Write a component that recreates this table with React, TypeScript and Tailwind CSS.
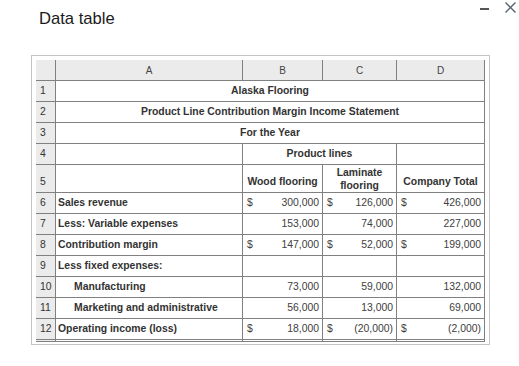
import React from "react";

const B = "border-r border-b border-[#808080]";
const font = { fontFamily: '"Liberation Sans", Arial, sans-serif' };

function Num({ n, dollar, last }: { n: string; dollar?: boolean; last?: boolean }) {
  return (
    <div
      className={`${B} ${last ? "border-b-[3px] border-double" : ""} flex items-center justify-between pl-[4px] pr-[3px] text-[10.4px] text-[#404040]`}
    >
      <span>{dollar ? "$" : ""}</span>
      <span>{n}</span>
    </div>
  );
}

function RowNum({ n, last, align = "items-center" }: { n: string; last?: boolean; align?: string }) {
  return (
    <div
      className={`${B} ${last ? "border-b-[3px] border-double" : ""} bg-[#ebebeb] flex ${align} pl-[4px] text-[10.4px] text-[#333]`}
    >
      {n}
    </div>
  );
}

function Label({ t, indent, last }: { t: string; indent?: boolean; last?: boolean }) {
  return (
    <div
      className={`${B} ${last ? "border-b-[3px] border-double" : ""} flex items-center ${indent ? "pl-[18px]" : "pl-[2px]"} font-bold text-[10.4px] text-[#333]`}
    >
      {t}
    </div>
  );
}

type R = {
  n: string;
  label: string;
  indent?: boolean;
  b?: [string, boolean];
  c?: [string, boolean];
  d?: [string, boolean];
};

const rows: R[] = [
  { n: "6", label: "Sales revenue", b: ["300,000", true], c: ["126,000", true], d: ["426,000", true] },
  { n: "7", label: "Less: Variable expenses", b: ["153,000", false], c: ["74,000", false], d: ["227,000", false] },
  { n: "8", label: "Contribution margin", b: ["147,000", true], c: ["52,000", true], d: ["199,000", true] },
  { n: "9", label: "Less fixed expenses:" },
  { n: "10", label: "Manufacturing", indent: true, b: ["73,000", false], c: ["59,000", false], d: ["132,000", false] },
  { n: "11", label: "Marketing and administrative", indent: true, b: ["56,000", false], c: ["13,000", false], d: ["69,000", false] },
  { n: "12", label: "Operating income (loss)", b: ["18,000", true], c: ["(20,000)", true], d: ["(2,000)", true] },
];

export default function App() {
  return (
    <div className="relative w-[519px] h-[366px] bg-white" style={font}>
      <div className="absolute left-[480px] top-[8px] w-[9px] h-[2px] bg-[#555]" />
      <svg className="absolute left-[504px] top-[1px]" width="13" height="13" viewBox="0 0 13 13">
        <path d="M1.5 1.5 L11.5 11.5 M11.5 1.5 L1.5 11.5" stroke="#5a6370" strokeWidth="1.4" fill="none" />
      </svg>
      <div className="pl-[39px] pt-[9px] text-[16.6px] leading-[20px] text-[#1a1a1a]">Data table</div>
      <div className="ml-[31px] mt-[26px] w-[459px] border border-[#c4c4c4] pl-[4px] pt-[4px] pb-[2px]">
        <div className="grid grid-cols-[20px_187px_80px_74px_88px] grid-rows-[21px_21px_21px_21px_21px_28px_21px_21px_21px_21px_21px_21px_23px]">
          {/* header */}
          <div className={`${B} bg-[#ebebeb]`} />
          {["A", "B", "C", "D"].map((l) => (
            <div key={l} className={`${B} bg-[#ebebeb] flex items-center justify-center text-[10px] text-[#444]`}>
              {l}
            </div>
          ))}
          {/* rows 1-3 */}
          {[
            ["1", "Alaska Flooring"],
            ["2", "Product Line Contribution Margin Income Statement"],
            ["3", "For the Year"],
          ].map(([n, t]) => (
            <React.Fragment key={n}>
              <RowNum n={n} />
              <div className={`${B} col-span-4 flex items-center justify-center font-bold text-[10.4px] text-[#333]`}>{t}</div>
            </React.Fragment>
          ))}
          {/* row 4 */}
          <RowNum n="4" />
          <div className={B} />
          <div className={`${B} col-span-2 flex items-center justify-center font-bold text-[10.4px] text-[#333]`}>Product lines</div>
          <div className={B} />
          {/* row 5 */}
          <RowNum n="5" align="items-end pb-[2px]" />
          <div className={B} />
          <div className={`${B} flex items-end justify-center pb-[2px] font-bold text-[10.4px] text-[#333]`}>Wood flooring</div>
          <div className={`${B} flex flex-col items-center justify-center leading-[13px] font-bold text-[10.4px] text-[#333]`}>
            <span>Laminate</span>
            <span>flooring</span>
          </div>
          <div className={`${B} flex items-end justify-center pb-[2px] font-bold text-[10.4px] text-[#333]`}>Company Total</div>
          {rows.map((r, i) => {
            const last = i === rows.length - 1;
            return (
              <React.Fragment key={r.n}>
                <RowNum n={r.n} last={last} />
                <Label t={r.label} indent={r.indent} last={last} />
                {r.b ? <Num n={r.b[0]} dollar={r.b[1]} last={last} /> : <div className={B} />}
                {r.c ? <Num n={r.c[0]} dollar={r.c[1]} last={last} /> : <div className={B} />}
                {r.d ? <Num n={r.d[0]} dollar={r.d[1]} last={last} /> : <div className={B} />}
              </React.Fragment>
            );
          })}
        </div>
      </div>
    </div>
  );
}
